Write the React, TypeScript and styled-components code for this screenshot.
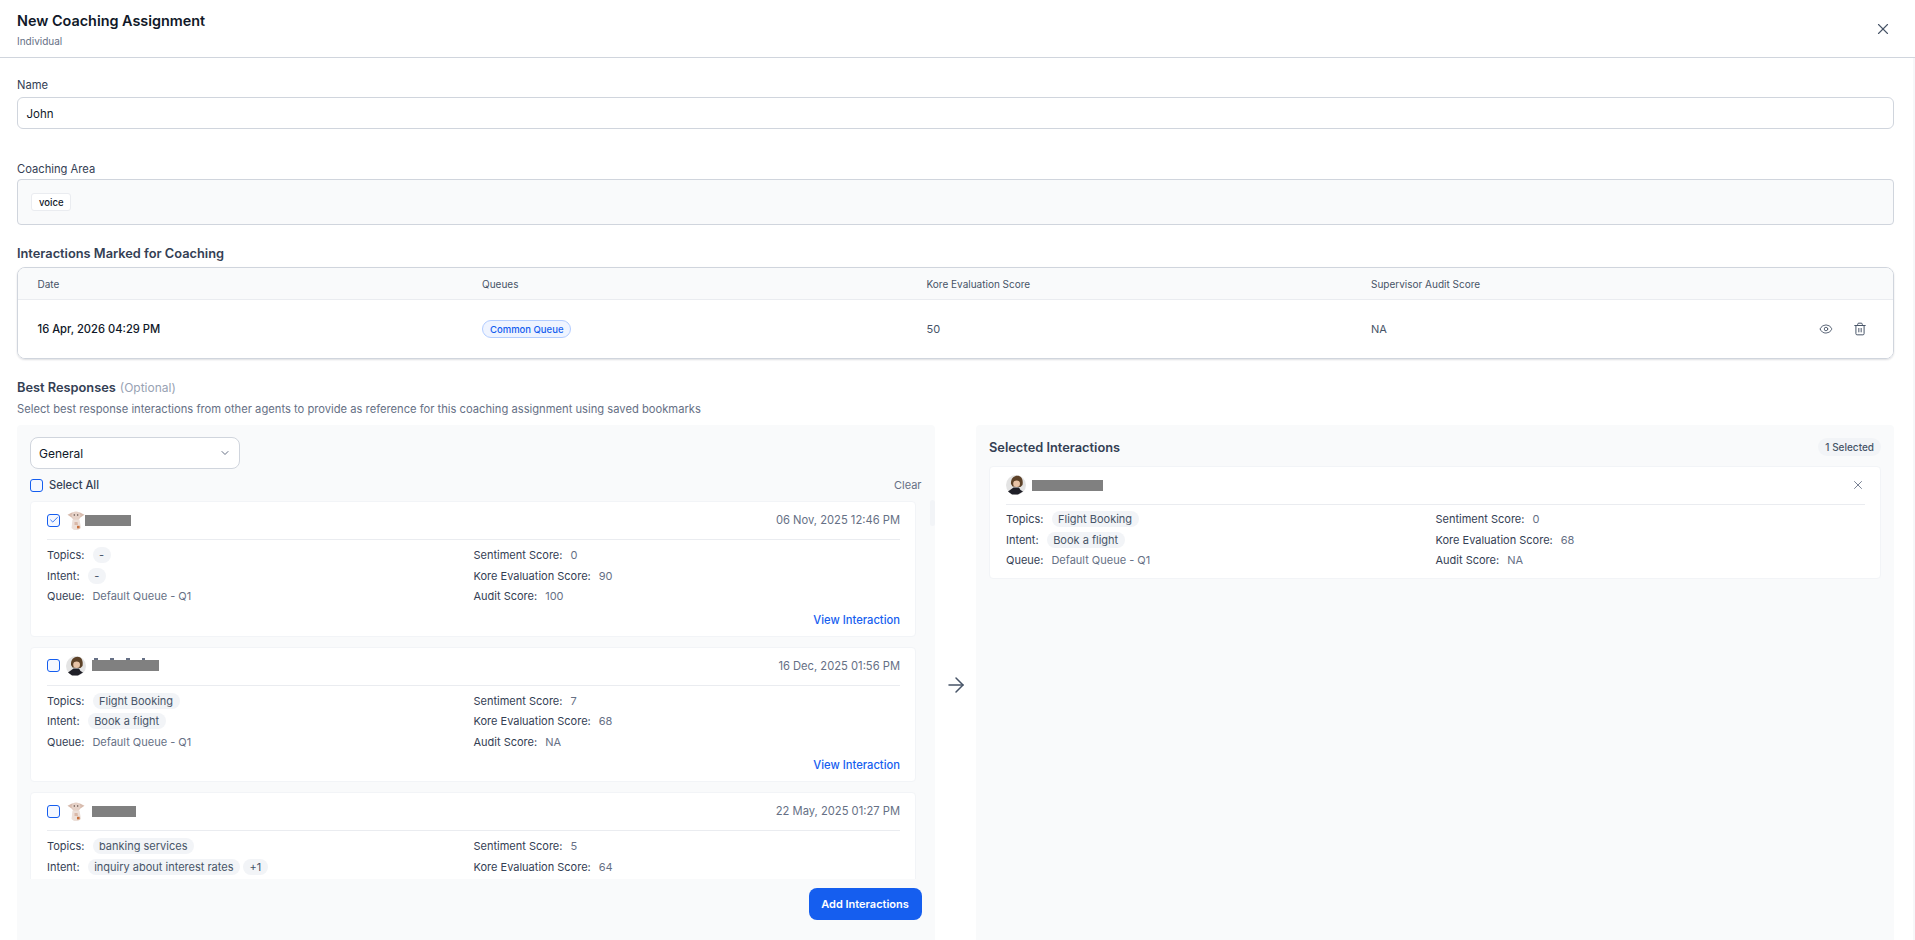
import { ArrowRight, Check, ChevronDown, Eye, Trash2, X } from "lucide-react";
import styled, { createGlobalStyle } from "styled-components";

const GlobalStyle = createGlobalStyle`
  * {
    box-sizing: border-box;
  }
  html, body {
    margin: 0;
    height: 100%;
    overflow: hidden;
    background: #fff;
    font-family: Inter, "Noto Sans", sans-serif;
    color: #344054;
  }
`;

const Page = styled.div`
  height: 940px;
  display: flex;
  flex-direction: column;
  overflow: hidden;
`;

const Header = styled.header`
  flex: none;
  height: 58px;
  padding: 11px 23px 0 17px;
  display: flex;
  justify-content: space-between;
  border-bottom: 1px solid #d0d5dd;
`;

const Title = styled.h1`
  margin: 0;
  font-size: 14.4px;
  line-height: 20px;
  font-weight: 600;
  color: #101828;
`;

const Subtitle = styled.div`
  margin-top: 1.5px;
  font-size: 10px;
  line-height: 16px;
  color: #667085;
`;

const CloseBtn = styled.div`
  margin-top: 9px;
  height: 18px;
  color: #475467;
`;

const Body = styled.main`
  flex: 1;
  min-height: 0;
  display: flex;
  flex-direction: column;
  padding: 19px 19px 0 17px;
  border-right: 2px solid #f7f7f9;
`;

const Label = styled.div`
  padding-top: 1px;
  font-size: 11.2px;
  line-height: 15px;
  font-weight: 400;
  color: #344054;
`;

const NameInput = styled.div`
  margin-top: 4px;
  height: 32px;
  padding: 1px 8.5px 0;
  display: flex;
  align-items: center;
  border: 1px solid #d0d5dd;
  border-radius: 6px;
  font-size: 11.5px;
  color: #101828;
`;

const AreaLabel = styled(Label)`
  margin-top: 32px;
`;

const AreaBox = styled.div`
  margin-top: 2px;
  height: 46px;
  padding: 0 13px;
  display: flex;
  align-items: center;
  background: #f9fafb;
  border: 1px solid #d0d5dd;
  border-radius: 4px;
`;

const AreaChip = styled.span`
  height: 18px;
  padding: 0 7px;
  display: flex;
  align-items: center;
  background: #fff;
  border: 1px solid #eaecf0;
  border-radius: 3px;
  font-size: 9.5px;
  font-weight: 500;
  color: #101828;
`;

const SectionTitle = styled.h2`
  margin: 18px 0 0;
  padding-top: 1px;
  font-size: 12.8px;
  line-height: 19px;
  font-weight: 600;
  color: #344054;
`;

const Optional = styled.span`
  margin-left: 4px;
  font-size: 12px;
  font-weight: 400;
  color: #98a2b3;
`;

const SectionHint = styled.div`
  margin-top: 4px;
  padding-top: 1px;
  font-size: 11.2px;
  line-height: 15px;
  color: #667085;
`;

const Table = styled.div`
  margin-top: 4px;
  border: 1px solid #d0d5dd;
  border-radius: 8px;
  overflow: hidden;
  box-shadow: 0 1px 2px rgba(16, 24, 40, 0.14);
`;

const TableRow = styled.div<{ $head?: boolean }>`
  display: grid;
  grid-template-columns: repeat(4, 444.5px) 1fr;
  align-items: center;
  height: ${(p) => (p.$head ? "32px" : "58px")};
  padding-left: 19.5px;
  background: ${(p) => (p.$head ? "#f9fafb" : "#fff")};
  border-bottom: ${(p) => (p.$head ? "1px solid #eaecf0" : "none")};
  font-size: ${(p) => (p.$head ? "10px" : "11px")};
  color: #475467;
`;

const DateCell = styled.span`
  font-size: 11.2px;
  font-weight: 500;
  color: #101828;
`;

const QueueBadge = styled.span`
  display: inline-flex;
  align-items: center;
  height: 18px;
  padding: 0 7px;
  background: #eff4ff;
  border: 1px solid #b2ccff;
  border-radius: 9px;
  font-size: 9.5px;
  font-weight: 500;
  color: #155eef;
`;

const RowActions = styled.div`
  display: flex;
  justify-content: flex-end;
  gap: 20px;
  padding-right: 26px;
  color: #475467;
`;

const Columns = styled.div`
  flex: 1;
  min-height: 0;
  margin-top: 8px;
  display: grid;
  grid-template-columns: 1fr 41px 1fr;
`;

const Panel = styled.section`
  min-height: 0;
  background: #f9fafb;
  border-radius: 4px 4px 0 0;
`;

const LeftPanel = styled(Panel)`
  position: relative;
  padding: 12px 13.5px 0 13px;
`;

const RightPanel = styled(Panel)`
  padding: 13px 13px 0;
`;

const ArrowCell = styled.div`
  display: flex;
  align-items: center;
  justify-content: center;
  padding-top: 5px;
  color: #475467;
`;

const Select = styled.div`
  width: 210px;
  height: 32px;
  padding: 0 8px;
  display: flex;
  align-items: center;
  justify-content: space-between;
  background: #fff;
  border: 1px solid #d0d5dd;
  border-radius: 8px;
  font-size: 12px;
  color: #101828;
  svg {
    color: #667085;
  }
`;

const SelectAllRow = styled.div`
  margin-top: 8px;
  height: 16px;
  display: flex;
  align-items: center;
  justify-content: space-between;
`;

const SelectAll = styled.label`
  display: flex;
  align-items: center;
  gap: 6px;
  font-size: 11.2px;
  font-weight: 500;
  color: #344054;
`;

const ClearLink = styled.span`
  font-size: 11px;
  color: #667085;
`;

const Box = styled.span`
  flex: none;
  width: 13px;
  height: 13px;
  display: flex;
  align-items: center;
  justify-content: center;
  background: #f5f8ff;
  border: 1px solid #155eef;
  border-radius: 3px;
  color: #155eef;
`;

const List = styled.div`
  margin: 8px -13.5px 0 0;
  padding-right: 19px;
  height: 378px;
  display: flex;
  flex-direction: column;
  gap: 10px;
  overflow: hidden;
`;

const ScrollThumb = styled.div`
  position: absolute;
  top: 75px;
  right: 0;
  width: 5px;
  height: 26px;
  border-radius: 3px;
  background: #f2f4f7;
`;

const Card = styled.article<{ $partial?: boolean }>`
  flex: none;
  min-height: ${(p) => (p.$partial ? "135.5px" : "0")};
  padding: 8px 15px 8px 16px;
  background: #fff;
  border: 1px solid #f2f4f7;
  border-radius: 4px;
`;

const CardHead = styled.div`
  height: 30px;
  padding-bottom: 9px;
  display: flex;
  align-items: center;
  gap: 6px;
  border-bottom: 1px solid #eaecf0;
`;

const Redacted = styled.span<{ $w: number; $ticks?: boolean; $tucked?: boolean }>`
  position: relative;
  width: ${(p) => p.$w}px;
  height: 11px;
  margin-left: ${(p) => (p.$tucked ? "-7px" : "0")};
  background: #808080;
  &::before {
    content: "";
    display: ${(p) => (p.$ticks ? "block" : "none")};
    position: absolute;
    left: 2px;
    right: 14px;
    top: -2px;
    height: 2px;
    background: repeating-linear-gradient(90deg, #667085 0 4px, transparent 4px 16px);
  }
`;

const CardDate = styled.span`
  margin-left: auto;
  font-size: 11.2px;
  color: #667085;
`;

const RemoveBtn = styled.span`
  margin-left: auto;
  display: flex;
  color: #667085;
`;

const Details = styled.div<{ $tight?: boolean }>`
  margin-top: ${(p) => (p.$tight ? "6px" : "7px")};
  display: grid;
  grid-template-columns: 1fr 1fr;
  grid-auto-rows: 16px;
  row-gap: 4.5px;
  padding-bottom: ${(p) => (p.$tight ? "2px" : "0")};
`;

const Detail = styled.div`
  display: flex;
  align-items: center;
  gap: 8px;
  font-size: 11px;
  white-space: nowrap;
`;

const DetailName = styled.span`
  color: #344054;
`;

const DetailValue = styled.span`
  color: #667085;
`;

const Chip = styled.span`
  height: 16px;
  padding: 0 6.5px;
  display: flex;
  align-items: center;
  background: #f2f4f7;
  border-radius: 8px;
  color: #475467;
`;

const ChipGroup = styled.span`
  display: flex;
  gap: 3px;
`;

const ViewLink = styled.div`
  width: fit-content;
  margin: 7.5px 0 0 auto;
  height: 16px;
  line-height: 16px;
  font-size: 11.2px;
  font-weight: 500;
  color: #155eef;
`;

const Footer = styled.div`
  margin-top: 9px;
  display: flex;
  justify-content: flex-end;
`;

const PrimaryBtn = styled.button`
  width: 113px;
  height: 32px;
  border: none;
  border-radius: 8px;
  background: #155eef;
  color: #fff;
  font: 600 11px Inter, sans-serif;
`;

const SelectedHead = styled.div`
  height: 18px;
  display: flex;
  align-items: center;
  justify-content: space-between;
`;

const SelectedTitle = styled.h3`
  margin: 0;
  font-size: 12.8px;
  font-weight: 600;
  color: #344054;
`;

const CountPill = styled.span`
  height: 18px;
  padding: 0 7px;
  display: flex;
  align-items: center;
  background: #f2f4f7;
  border-radius: 9px;
  font-size: 10px;
  font-weight: 500;
  color: #475467;
`;

const SelectedList = styled.div`
  margin-top: 10px;
`;

const CreatureAvatar = () => (
  <svg width="20" height="20" viewBox="0 0 20 20">
    <path d="M1.500 4.800 6 2.500h8l4.500 2.300-4.500 3-1.500 2h-5l-1.500-2Z" fill="#d8bcae" />
    <ellipse cx="10" cy="5.500" rx="4.400" ry="4" fill="#e6d2c8" />
    <circle cx="8.300" cy="5" r=".7" fill="#4e3f38" />
    <circle cx="11.700" cy="5" r=".7" fill="#4e3f38" />
    <path d="M6.500 9.500h7l1.500 8.500-3 2H8l-2.500-2Z" fill="#ecdfd8" />
    <path d="M8.500 12h3l.5 3H8.500Z" fill="#d9b9a9" />
    <path d="M11 15.800h2.600v2.600H11Z" fill="#c8703c" />
  </svg>
);

const GirlAvatar = () => (
  <svg width="20" height="20" viewBox="0 0 20 20">
    <circle cx="10" cy="10" r="10" fill="#e4e4e4" />
    <path d="M5 9C4.500 3.500 8 .8 11.500.8S17.500 4 16.500 10l-2 2-8-.5Z" fill="#5d4228" />
    <ellipse cx="10.600" cy="8.800" rx="3.400" ry="3.200" fill="#e8c3a6" />
    <path d="M7 7c1.500-2.500 5.500-3 7.200-.6L13.500 4l-4.500-.6Z" fill="#5d4228" />
    <path d="M2 16.500 7.500 12.500h5.500l1.500 2.500 2.500 1.500-5 3H6Z" fill="#1f1f27" />
  </svg>
);

interface InteractionData {
  date?: string;
  avatar: "creature" | "girl";
  nameWidth: number;
  ticks?: boolean;
  tucked?: boolean;
  // card runs past the bottom of the scroll area, its last rows are out of view
  partial?: boolean;
  topics?: string;
  intent?: string;
  extra?: string;
  sentiment: string;
  kore: string;
  audit?: string;
}

const interactions: InteractionData[] = [
  { date: "06 Nov, 2025 12:46 PM", avatar: "creature", nameWidth: 46, tucked: true, sentiment: "0", kore: "90", audit: "100" },
  {
    date: "16 Dec, 2025 01:56 PM",
    avatar: "girl",
    nameWidth: 67,
    ticks: true,
    topics: "Flight Booking",
    intent: "Book a flight",
    sentiment: "7",
    kore: "68",
    audit: "NA",
  },
  {
    date: "22 May, 2025 01:27 PM",
    avatar: "creature",
    nameWidth: 44,
    partial: true,
    topics: "banking services",
    intent: "inquiry about interest rates",
    extra: "+1",
    sentiment: "5",
    kore: "64",
  },
];

function DetailGrid({ item, tight }: { item: InteractionData; tight?: boolean }) {
  return (
    <Details $tight={tight}>
      <Detail>
        <DetailName>Topics:</DetailName>
        <Chip>{item.topics ?? "-"}</Chip>
      </Detail>
      <Detail>
        <DetailName>Sentiment Score:</DetailName>
        <DetailValue>{item.sentiment}</DetailValue>
      </Detail>
      <Detail>
        <DetailName>Intent:</DetailName>
        <ChipGroup>
          <Chip>{item.intent ?? "-"}</Chip>
          {item.extra && <Chip>{item.extra}</Chip>}
        </ChipGroup>
      </Detail>
      <Detail>
        <DetailName>Kore Evaluation Score:</DetailName>
        <DetailValue>{item.kore}</DetailValue>
      </Detail>
      {!item.partial && (
        <>
          <Detail>
            <DetailName>Queue:</DetailName>
            <DetailValue>Default Queue - Q1</DetailValue>
          </Detail>
          <Detail>
            <DetailName>Audit Score:</DetailName>
            <DetailValue>{item.audit}</DetailValue>
          </Detail>
        </>
      )}
    </Details>
  );
}

function InteractionCard({ item, checked }: { item: InteractionData; checked?: boolean }) {
  return (
    <Card $partial={item.partial}>
      <CardHead>
        <Box>{checked && <Check size={10} strokeWidth={2} />}</Box>
        {item.avatar === "creature" ? <CreatureAvatar /> : <GirlAvatar />}
        <Redacted $w={item.nameWidth} $ticks={item.ticks} $tucked={item.tucked} />
        <CardDate>{item.date}</CardDate>
      </CardHead>
      <DetailGrid item={item} />
      {!item.partial && <ViewLink>View Interaction</ViewLink>}
    </Card>
  );
}

const selected: InteractionData = {
  avatar: "girl",
  nameWidth: 71,
  topics: "Flight Booking",
  intent: "Book a flight",
  sentiment: "0",
  kore: "68",
  audit: "NA",
};

export default function App() {
  return (
    <Page>
      <GlobalStyle />
      <Header>
        <div>
          <Title>New Coaching Assignment</Title>
          <Subtitle>Individual</Subtitle>
        </div>
        <CloseBtn>
          <X size={18} strokeWidth={1.5} />
        </CloseBtn>
      </Header>
      <Body>
        <Label>Name</Label>
        <NameInput>John</NameInput>
        <AreaLabel>Coaching Area</AreaLabel>
        <AreaBox>
          <AreaChip>voice</AreaChip>
        </AreaBox>

        <SectionTitle>Interactions Marked for Coaching</SectionTitle>
        <Table>
          <TableRow $head>
            <span>Date</span>
            <span>Queues</span>
            <span>Kore Evaluation Score</span>
            <span>Supervisor Audit Score</span>
          </TableRow>
          <TableRow>
            <DateCell>16 Apr, 2026 04:29 PM</DateCell>
            <span>
              <QueueBadge>Common Queue</QueueBadge>
            </span>
            <span>50</span>
            <span>NA</span>
            <RowActions>
              <Eye size={14} strokeWidth={1.5} />
              <Trash2 size={14} strokeWidth={1.7} />
            </RowActions>
          </TableRow>
        </Table>

        <SectionTitle>
          Best Responses<Optional>(Optional)</Optional>
        </SectionTitle>
        <SectionHint>
          Select best response interactions from other agents to provide as reference for this
          coaching assignment using saved bookmarks
        </SectionHint>

        <Columns>
          <LeftPanel>
            <Select>
              General
              <ChevronDown size={12} />
            </Select>
            <SelectAllRow>
              <SelectAll>
                <Box />
                Select All
              </SelectAll>
              <ClearLink>Clear</ClearLink>
            </SelectAllRow>
            <List>
              {interactions.map((item, i) => (
                <InteractionCard key={item.date} item={item} checked={i === 0} />
              ))}
            </List>
            <ScrollThumb />
            <Footer>
              <PrimaryBtn>Add Interactions</PrimaryBtn>
            </Footer>
          </LeftPanel>

          <ArrowCell>
            <ArrowRight size={24} strokeWidth={1.5} />
          </ArrowCell>

          <RightPanel>
            <SelectedHead>
              <SelectedTitle>Selected Interactions</SelectedTitle>
              <CountPill>1 Selected</CountPill>
            </SelectedHead>
            <SelectedList>
              <Card>
                <CardHead>
                  <GirlAvatar />
                  <Redacted $w={selected.nameWidth} />
                  <RemoveBtn>
                    <X size={14} strokeWidth={1.5} />
                  </RemoveBtn>
                </CardHead>
                <DetailGrid item={selected} tight />
              </Card>
            </SelectedList>
          </RightPanel>
        </Columns>
      </Body>
    </Page>
  );
}
